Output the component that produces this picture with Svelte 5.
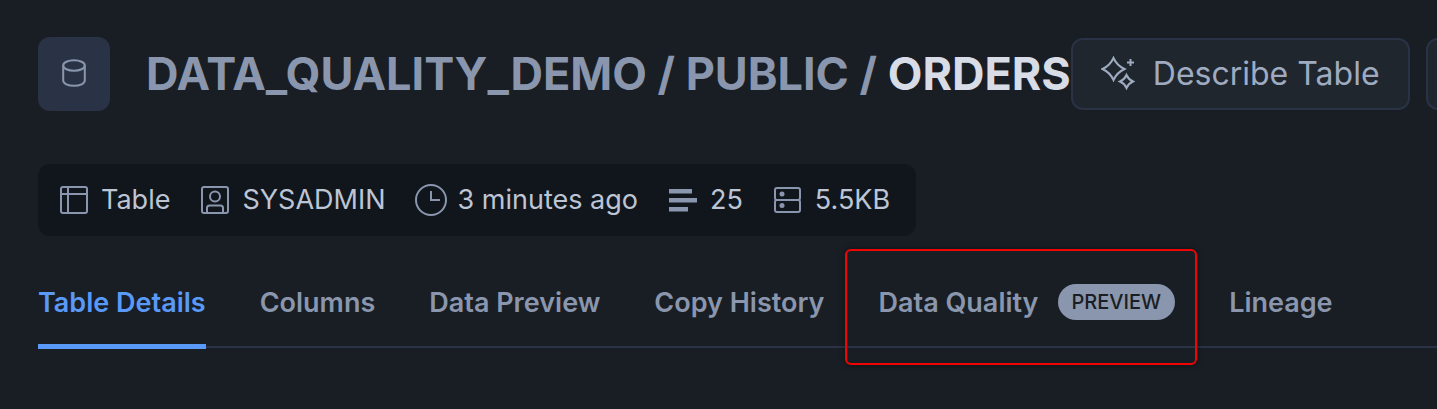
<script lang="ts">
  const tabs = [
    { label: 'Table Details' },
    { label: 'Columns' },
    { label: 'Data Preview' },
    { label: 'Copy History' },
    { label: 'Data Quality', badge: 'PREVIEW', marked: true },
    { label: 'Lineage' },
  ]

  const meta = [
    { icon: 'table', text: 'Table' },
    { icon: 'role', text: 'SYSADMIN' },
    { icon: 'clock', text: '3 minutes ago' },
    { icon: 'rows', text: '25' },
    { icon: 'storage', text: '5.5KB' },
  ]

  let active = $state('Table Details')
</script>

<main>
  <header>
    <div class="tile">
      <svg width="32" height="32" viewBox="0 0 32 32" aria-hidden="true">
        <ellipse cx="16" cy="7.500" rx="10.800" ry="5.300" />
        <path d="M5.200 7.500v15c0 3 4.800 5.300 10.800 5.300s10.800-2.300 10.800-5.300v-15" />
      </svg>
    </div>
    <h1>
      <a href="#database">DATA_QUALITY_DEMO</a> / <a href="#schema">PUBLIC</a> / <span>ORDERS</span>
    </h1>
    <div class="actions">
      <button class="action">
        <svg width="34" height="34" viewBox="0 0 34 34" aria-hidden="true">
          <path d="M12.500 2C15 7.500 18 10.500 23.500 13C18 15.500 15 18.500 12.500 24C10 18.500 7 15.500 1.500 13C7 10.500 10 7.500 12.500 2Z" />
          <path d="M25.500 19C27 22.500 28.500 24 32 25.500C28.500 27 27 28.500 25.500 32C24 28.500 22.500 27 19 25.500C22.500 24 24 22.500 25.500 19Z" />
          <path d="M29.500 3v7M26 6.500h7" />
        </svg>
        Describe Table
      </button>
      <button class="action more" aria-label="More"></button>
    </div>
  </header>

  <ul class="meta">
    {#each meta as item}
      <li>
        <svg width="32" height="32" viewBox="0 0 32 32" aria-hidden="true">
          {#if item.icon === 'table'}
            <rect x="3" y="3" width="26" height="26" rx="2" />
            <path d="M3 10h26M10 3v26" />
          {:else if item.icon === 'role'}
            <rect x="3" y="3" width="26" height="26" rx="2" />
            <circle cx="16" cy="12.500" r="5" />
            <path d="M8 29v-5a2.500 2.500 0 0 1 2.500-2.500h11a2.500 2.500 0 0 1 2.500 2.500v5" />
          {:else if item.icon === 'clock'}
            <circle cx="16" cy="16" r="15" />
            <path d="M16 7v9h9" />
          {:else if item.icon === 'rows'}
            <path class="solid" d="M2 5h23v4.500H2zM2 14h28v4.500H2zM2 23h19v4.500H2z" />
          {:else}
            <rect x="3" y="4" width="25" height="12" rx="2" />
            <rect x="3" y="16" width="25" height="12" rx="2" />
            <circle class="solid" cx="10" cy="10" r="2.500" />
            <circle class="solid" cx="10" cy="21.500" r="2.500" />
          {/if}
        </svg>
        {item.text}
      </li>
    {/each}
  </ul>

  <nav>
    {#each tabs as tab}
      <button
        class="tab"
        class:active={active === tab.label}
        class:marked={tab.marked}
        onclick={() => (active = tab.label)}
      >
        {tab.label}
        {#if tab.badge}<span class="badge">{tab.badge}</span>{/if}
      </button>
    {/each}
  </nav>
</main>

<style>
  :global(body) {
    background: #191e24;
    overflow-x: hidden;
  }

  main {
    padding: 37px 0 60px 38px;
    color: #8a96ad;
    font-family: Inter, 'Liberation Sans', sans-serif;
    overflow: hidden;
  }

  svg {
    flex: none;
    fill: none;
    stroke: currentColor;
    stroke-width: 2;
  }

  .solid {
    fill: currentColor;
    stroke: none;
  }

  button {
    font-family: inherit;
    cursor: pointer;
  }

  header {
    display: flex;
    align-items: center;
  }

  .tile {
    display: flex;
    flex: none;
    align-items: center;
    justify-content: center;
    width: 72px;
    height: 74px;
    margin-right: 36px;
    border-radius: 12px;
    background: #2a3246;
  }

  h1 {
    margin: 0;
    font-size: 45px;
    line-height: 56px;
    font-weight: 700;
    white-space: nowrap;
  }

  h1 a {
    color: inherit;
    text-decoration: none;
  }

  h1 span {
    color: #d7dce6;
  }

  .actions {
    display: flex;
    gap: 16px;
  }

  .action {
    display: flex;
    flex: none;
    align-items: center;
    gap: 18px;
    height: 72px;
    padding: 0 28px 2px;
    border: 2px solid #2a3246;
    border-radius: 12px;
    background: #1f262e;
    color: #9fabc1;
    font-size: 32px;
    white-space: nowrap;
  }

  .more {
    width: 72px;
  }

  .meta {
    display: flex;
    gap: 29px;
    width: fit-content;
    margin: 53px 0 0;
    padding: 18px 26px 18px 20px;
    border-radius: 12px;
    background: #10161c;
    list-style: none;
  }

  .meta li {
    display: flex;
    align-items: center;
    gap: 11px;
    color: #bdc5d5;
    font-size: 27px;
    line-height: 36px;
    white-space: nowrap;
  }

  .meta svg {
    color: #8a96ad;
  }

  nav {
    display: flex;
    gap: 54px;
    margin-top: 22px;
    box-shadow: inset 0 -1px #191e24, inset 0 -3px #2a3246;
  }

  .tab {
    position: relative;
    display: flex;
    flex: none;
    align-items: center;
    gap: 19px;
    height: 91px;
    padding: 0 0 3px;
    border: none;
    background: none;
    color: inherit;
    font-size: 27px;
    font-weight: 600;
    white-space: nowrap;
  }

  .active {
    color: #5999f8;
    box-shadow: inset 0 -5px #5999f8;
  }

  .badge {
    padding: 0 14px;
    border-radius: 18px;
    background: #8a96ad;
    color: #191e24;
    font-size: 20px;
    line-height: 36px;
    font-weight: 500;
  }

  .marked::after {
    content: '';
    position: absolute;
    inset: -9px -22px -16px -34px;
    border: 2px solid #f00404;
    border-radius: 6px;
    box-shadow: 0 0 6px rgba(0, 0, 0, 0.4);
  }
</style>
